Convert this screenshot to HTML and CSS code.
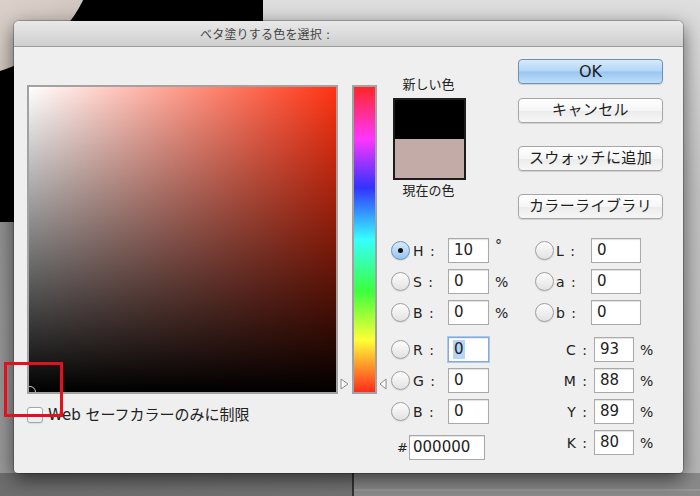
FILE: index.html
```html
<!DOCTYPE html>
<html lang="ja">
<head>
<meta charset="utf-8">
<title>ベタ塗りする色を選択</title>
<link rel="stylesheet" href="styles.css">
</head>
<body>
<div class="desktop">
  <div class="bg-black"></div>
  <div class="bg-plate"></div>
  <div class="bg-light"></div>
  <div class="bg-bottom"><div class="bg-bottom-right"></div></div>

  <div class="dialog">
    <div class="titlebar"><span class="title">ベタ塗りする色を選択 :</span></div>
    <div class="body">
      <div class="picker">
        <div class="picker-row">
          <div class="field"><span class="field-marker"></span></div>
          <div class="hue-wrap">
            <div class="hue"></div>
            <svg class="tri tri-left" width="9" height="12" viewBox="0 0 9 12"><polygon points="1,1 8,6 1,11" fill="#fff" stroke="#8a8a8a" stroke-width="1"/></svg>
            <svg class="tri tri-right" width="8" height="12" viewBox="0 0 8 12"><polygon points="7,1 1,6 7,11" fill="#fff" stroke="#8a8a8a" stroke-width="1"/></svg>
          </div>
        </div>
        <div class="websafe"><span class="checkbox"></span><span class="websafe-text">Web セーフカラーのみに制限</span></div>
      </div>

      <div class="panel">
        <div class="panel-top">
          <div class="swatches">
            <div class="swatch-label">新しい色</div>
            <div class="swatch"><div class="swatch-new"></div><div class="swatch-cur"></div></div>
            <div class="swatch-label swatch-label-bottom">現在の色</div>
          </div>
          <div class="buttons">
            <div class="btn btn-ok">OK</div>
            <div class="btn btn-cancel">キャンセル</div>
            <div class="btn btn-gap">スウォッチに追加</div>
            <div class="btn btn-gap">カラーライブラリ</div>
          </div>
        </div>

        <div class="fields">
          <div class="col col-a">
            <div class="row"><span class="radio on"></span><span class="lbl">H :</span><span class="box w41">10</span><span class="unit deg">°</span></div>
            <div class="row"><span class="radio"></span><span class="lbl">S :</span><span class="box w41">0</span><span class="unit">%</span></div>
            <div class="row"><span class="radio"></span><span class="lbl">B :</span><span class="box w41">0</span><span class="unit">%</span></div>
            <div class="row group"><span class="radio"></span><span class="lbl">R :</span><span class="box w41 focus"><span class="sel">0</span></span></div>
            <div class="row"><span class="radio"></span><span class="lbl">G :</span><span class="box w41">0</span></div>
            <div class="row"><span class="radio"></span><span class="lbl">B :</span><span class="box w41">0</span></div>
            <div class="row hex"><span class="hash">#</span><span class="box w76">000000</span></div>
          </div>
          <div class="col col-b">
            <div class="row"><span class="radio"></span><span class="lbl">L :</span><span class="box w50">0</span></div>
            <div class="row"><span class="radio"></span><span class="lbl">a :</span><span class="box w50">0</span></div>
            <div class="row"><span class="radio"></span><span class="lbl">b :</span><span class="box w50">0</span></div>
            <div class="row group"><span class="lbl-r">C :</span><span class="box w40">93</span><span class="unit">%</span></div>
            <div class="row"><span class="lbl-r">M :</span><span class="box w40">88</span><span class="unit">%</span></div>
            <div class="row"><span class="lbl-r">Y :</span><span class="box w40">89</span><span class="unit">%</span></div>
            <div class="row"><span class="lbl-r">K :</span><span class="box w40">80</span><span class="unit">%</span></div>
          </div>
        </div>
      </div>
    </div>
  </div>

  <div class="annotation"></div>
</div>
</body>
</html>
```

FILE: styles.css
```css
* { box-sizing: border-box; }

html, body {
  margin: 0;
  padding: 0;
}

body {
  width: 700px;
  height: 496px;
  overflow: hidden;
  font-family: "DejaVu Sans", "Noto Sans CJK JP", sans-serif;
  color: #1e1e1e;
}

.desktop {
  position: relative;
  width: 700px;
  height: 496px;
  overflow: hidden;
  background: linear-gradient(to bottom, #8a8a8a, #9a9a9a);
}

/* desktop picture behind the dialog */
.bg-black {
  position: absolute;
  left: 0;
  top: 0;
  width: 263px;
  height: 222px;
  background: #000;
}

.bg-plate {
  position: absolute;
  left: -177px;
  top: -197px;
  width: 274px;
  height: 274px;
  border-radius: 50%;
  background: radial-gradient(circle at 45% 45%, #e2dad3 0%, #d6ccc5 60%, #c4bab3 100%);
}

.bg-light {
  position: absolute;
  left: 263px;
  top: 0;
  right: 0;
  height: 473px;
  background: linear-gradient(to bottom, #dedede, #c2c2c2 40%, #b8b8b8);
}

.bg-bottom {
  position: absolute;
  left: 0;
  right: 0;
  top: 473px;
  height: 23px;
  background: linear-gradient(to right, #6e6e6e, #7a7a7a);
  display: flex;
  justify-content: flex-end;
}

.bg-bottom-right {
  width: 348px;
  height: 100%;
  border-left: 2px solid #333;
  background: linear-gradient(to bottom, #8a8a8a 0, #8a8a8a 16px, #a6a6a6 17px, #8c8c8c 18px);
}

/* dialog window */
.dialog {
  position: absolute;
  left: 14px;
  top: 21px;
  width: 669px;
  height: 452px;
  background: #efefef;
  border-radius: 5px 5px 4px 4px;
  overflow: hidden;
  box-shadow: 0 6px 20px rgba(0, 0, 0, 0.6), 0 0 0 1px rgba(0, 0, 0, 0.22);
}

.titlebar {
  height: 26px;
  background: linear-gradient(to bottom, #e9e9e9, #cfcfcf);
  border-bottom: 1px solid #9c9c9c;
  padding-left: 186px;
  line-height: 25px;
}

.title {
  font-size: 12px;
  letter-spacing: 0.2px;
  color: #444;
}

.body {
  display: flex;
  padding-left: 13px;
}

/* colour field + hue slider */
.picker {
  padding-top: 38px;
}

.picker-row {
  display: flex;
  gap: 14px;
}

.field {
  position: relative;
  width: 311px;
  height: 309px;
  border: 2px solid #a2a2a2;
  overflow: hidden;
  background:
    linear-gradient(to bottom, rgba(0, 0, 0, 0), #000),
    linear-gradient(to right, #fff, #ff3312);
}

.field-marker {
  position: absolute;
  left: -5px;
  bottom: -6px;
  width: 12px;
  height: 12px;
  border-radius: 50%;
  border: 1px solid #c8c8c8;
}

.hue-wrap {
  position: relative;
  width: 25px;
  height: 309px;
}

.hue {
  width: 100%;
  height: 100%;
  border: 2px solid #a2a2a2;
  background: linear-gradient(to bottom,
    #ff2626 0%,
    #ff36ff 17%,
    #3232ff 33%,
    #36ffff 50%,
    #3cff3c 67%,
    #ffff36 83%,
    #ff2c1c 100%);
}

.tri {
  position: absolute;
  top: 293px;
  display: block;
}

.tri-left { left: -12px; }
.tri-right { right: -10px; }

.websafe {
  display: flex;
  align-items: center;
  margin-top: 13px;
  height: 16px;
}

.checkbox {
  width: 16px;
  height: 16px;
  border: 1px solid #a5a5a5;
  border-radius: 3px;
  background: linear-gradient(to bottom, #fff, #ececec);
  box-shadow: 0 1px 1px rgba(0, 0, 0, 0.08);
}

.websafe-text {
  margin-left: 5px;
  font-size: 15px;
  line-height: 16px;
  color: #222;
}

/* right panel */
.panel {
  margin-left: 13px;
  padding-top: 12px;
}

.panel-top {
  display: flex;
  height: 158px;
}

.swatches {
  width: 80px;
  display: flex;
  flex-direction: column;
}

.swatch-label {
  margin-top: 18px;
  width: 77px;
  text-align: center;
  font-size: 13px;
  line-height: 16px;
  color: #222;
}

.swatch-label-bottom {
  margin-top: 3px;
}

.swatch {
  margin: 5px 0 0 3px;
  width: 73px;
  height: 82px;
  border: 2px solid #1c1c1c;
  display: flex;
  flex-direction: column;
}

.swatch-new {
  flex: 1;
  background: #000;
}

.swatch-cur {
  flex: 1;
  background: #c3aba7;
}

.buttons {
  margin-left: 48px;
  display: flex;
  flex-direction: column;
}

.btn {
  width: 145px;
  height: 25px;
  border: 1px solid #a6a6a6;
  border-radius: 4px;
  background: linear-gradient(to bottom, #ffffff 0%, #f6f6f6 50%, #ebebeb 52%, #f7f7f7 100%);
  box-shadow: 0 1px 1px rgba(0, 0, 0, 0.12);
  font-size: 15px;
  letter-spacing: 0.4px;
  line-height: 23px;
  text-align: center;
  color: #1e1e1e;
}

.btn-ok {
  border-color: #6f8fb6;
  background: linear-gradient(to bottom, #d6eafb 0%, #b3d6f6 48%, #98c6f1 52%, #bfdff9 100%);
  font-size: 16px;
  letter-spacing: 0;
}

.btn-cancel { margin-top: 14px; }
.btn-gap { margin-top: 23px; }

/* numeric fields */
.fields {
  display: flex;
  margin-top: 21px;
}

.col {
  display: flex;
  flex-direction: column;
  gap: 6px;
}

.col-a { width: 144px; }

.row {
  display: flex;
  align-items: center;
  height: 25px;
}

.row.group { margin-top: 6px; }
.row.hex { margin-top: 5px; }

.radio {
  position: relative;
  flex: none;
  width: 19px;
  height: 19px;
  margin-left: 1px;
  border-radius: 50%;
  border: 1px solid #9f9f9f;
  background: linear-gradient(to bottom, #fdfdfd, #e2e2e2);
  box-shadow: 0 1px 1px rgba(0, 0, 0, 0.1);
}

.radio.on {
  border-color: #6c91bd;
  background: linear-gradient(to bottom, #d9ebfb, #96c4f0);
}

.radio.on::after {
  content: "";
  position: absolute;
  left: 6px;
  top: 6px;
  width: 5px;
  height: 5px;
  border-radius: 50%;
  background: #111;
}

.lbl {
  width: 35px;
  margin-left: 3px;
  font-size: 14px;
  word-spacing: 2px;
  color: #222;
}

.col-b .lbl { width: 35px; margin-left: 2px; }

.lbl-r {
  width: 58px;
  padding-right: 5px;
  text-align: right;
  font-size: 14px;
  word-spacing: 2px;
  color: #222;
}

.box {
  height: 25px;
  border: 1px solid #a9a9a9;
  background: #fff;
  box-shadow: inset 0 1px 1px rgba(0, 0, 0, 0.12);
  font-size: 15px;
  line-height: 23px;
  padding-left: 5px;
  color: #222;
}

.lbl-r + .box { margin-left: 2px; }

.w40 { width: 40px; }
.w41 { width: 41px; }
.w50 { width: 50px; }
.w76 { width: 76px; padding-left: 3px; }

.box.focus {
  border-color: #86aad6;
  box-shadow: 0 0 0 1px #a9c8ec, inset 0 1px 1px rgba(0, 0, 0, 0.08);
  padding-left: 4px;
}

.sel {
  display: inline-block;
  padding: 0 1px;
  line-height: 19px;
  background: #b7d5f5;
}

.unit {
  margin-left: 6px;
  font-size: 14px;
  color: #222;
}

.unit.deg {
  align-self: flex-start;
  margin-top: -1px;
  font-size: 14px;
}

.hash {
  width: 19px;
  padding-left: 7px;
  font-size: 13px;
  color: #222;
}

/* red highlight drawn over the screenshot */
.annotation {
  position: absolute;
  left: 4px;
  top: 362px;
  width: 59px;
  height: 55px;
  border: 3px solid #e2121c;
}
```
